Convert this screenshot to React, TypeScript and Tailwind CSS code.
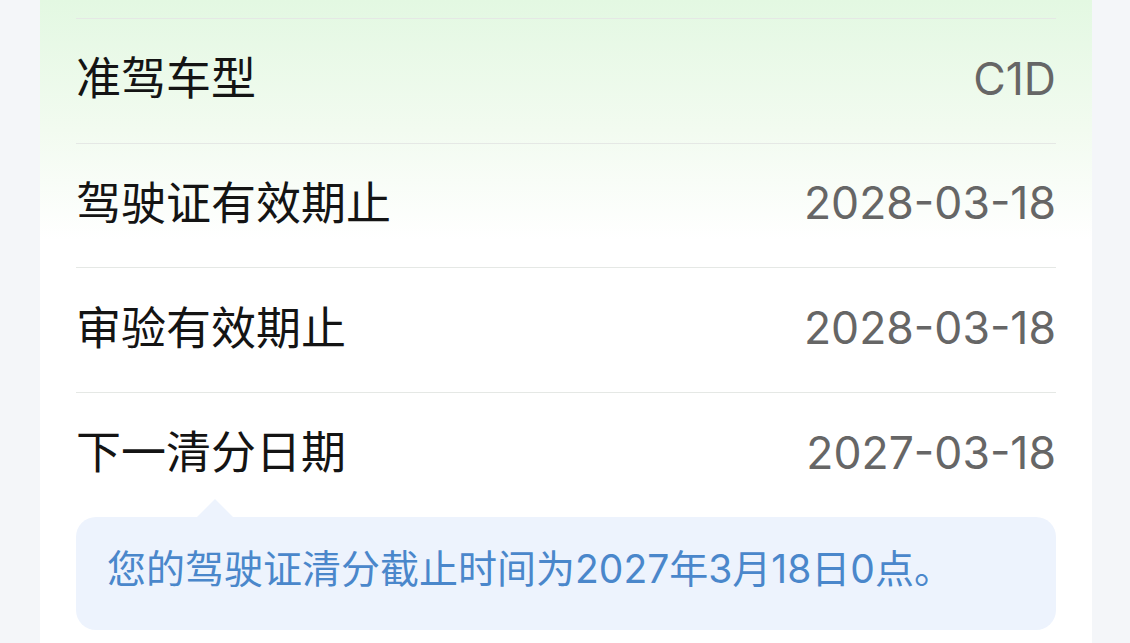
import React from "react";

const rows = [
  { label: "准驾车型", value: "C1D" },
  { label: "驾驶证有效期止", value: "2028-03-18" },
  { label: "审验有效期止", value: "2028-03-18" },
  { label: "下一清分日期", value: "2027-03-18" },
];

export default function App() {
  return (
    <div
      className="w-[1130px] h-[643px] overflow-hidden bg-[#f4f6f9]"
      style={{ fontFamily: 'Inter, "Noto Sans CJK SC", sans-serif' }}
    >
      <div className="ml-[40px] w-[1052px] h-full bg-[linear-gradient(180deg,#e3f8e2_0px,#f2fbf0_130px,#ffffff_240px)] px-[36px]">
        <div className="h-[18px]" />
        {rows.map((r) => (
          <div
            key={r.label}
            className="h-[124.7px] pb-[4px] flex items-center justify-between border-t border-[#e5e8e5]"
          >
            <span className="text-[45px] leading-none text-[#141414]">{r.label}</span>
            <span className="text-[44.5px] leading-none text-[#666666]">{r.value}</span>
          </div>
        ))}
        <div className="relative rounded-[20px] bg-[#edf3fd] h-[113px] flex items-center pl-[31px] pb-[10px]">
          <div className="absolute -top-[18px] left-[121px] w-0 h-0 border-l-[18px] border-r-[18px] border-b-[18px] border-l-transparent border-r-transparent border-b-[#edf3fd]" />
          <span className="text-[39px] leading-none text-[#4a87cb]">
            您的驾驶证清分截止时间为2027年3月18日0点。
          </span>
        </div>
      </div>
    </div>
  );
}
